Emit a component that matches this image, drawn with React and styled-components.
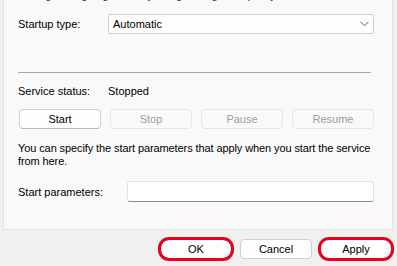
import React from 'react';
import styled, { createGlobalStyle, css } from 'styled-components';

const Global = createGlobalStyle`
  html, body { margin: 0; padding: 0; overflow: hidden; }
  body {
    background: #f0f0f0;
    font-family: "Liberation Sans", Arial, sans-serif;
    font-size: 11px;
    color: #000;
  }
`;

const Window = styled.div`
  width: 397px;
  height: 266px;
  background: #f0f0f0;
  overflow: hidden;
  display: flex;
  flex-direction: column;
`;

const Panel = styled.div`
  box-sizing: border-box;
  height: 230px;
  margin: 0 4px 0 3px;
  padding: 0 18px 0 14px;
  background: #f9f9f9;
  border: 1px solid #e3e3e3;
  border-top: none;
  display: flex;
  flex-direction: column;
`;

const ClippedLine = styled.div`
  margin-top: -12px;
  height: 14px;
  line-height: 14px;
  white-space: nowrap;
  color: #333;
`;

const FieldRow = styled.div`
  display: flex;
  align-items: center;
  margin-top: ${p => p.$top}px;
  height: ${p => p.$h || 14}px;
`;

const Label = styled.div`
  flex: 0 0 ${p => p.$w || 90}px;
`;

const Combo = styled.div`
  box-sizing: border-box;
  flex: 1;
  height: 20px;
  background: #fdfdfd;
  border: 1px solid #cfcfcf;
  border-radius: 2px;
  display: flex;
  align-items: center;
  justify-content: space-between;
  padding: 0 4px 0 4px;
`;

const Separator = styled.div`
  height: 1px;
  background: #a8a8a8;
  margin: 38px 3px 0 0;
`;

const ButtonRow = styled.div`
  display: grid;
  grid-template-columns: repeat(4, 1fr);
  gap: 9px;
  margin-top: 11px;
  padding-left: 1px;
`;

const ActionButton = styled.div`
  box-sizing: border-box;
  height: 20px;
  border-radius: 4px;
  display: flex;
  align-items: center;
  justify-content: center;
  ${p => p.$disabled
    ? css`
        background: #f9f9f9;
        border: 1px solid #e5e5e5;
        color: #9d9d9d;
      `
    : css`
        background: #fdfdfd;
        border: 1px solid #d2d2d2;
        border-bottom-color: #b8b8b8;
        color: #000;
      `}
`;

const Note = styled.div`
  margin-top: 13px;
  line-height: 13px;
  white-space: nowrap;
  letter-spacing: -0.1px;
`;

const TextInput = styled.div`
  box-sizing: border-box;
  flex: 1;
  height: 21px;
  background: #fff;
  border: 1px solid #e2e2e2;
  border-bottom: 1px solid #8c8c8c;
  border-radius: 3px;
`;

const Footer = styled.div`
  display: flex;
  justify-content: flex-end;
  gap: 8px;
  margin-top: 9px;
  padding-right: 5px;
`;

const DialogButton = styled.div`
  box-sizing: border-box;
  width: 72px;
  height: 20px;
  border-radius: 4px;
  background: #fdfdfd;
  border: 1px solid ${p => (p.$default ? '#3a3a3a' : '#d0d0d0')};
  display: flex;
  align-items: center;
  justify-content: center;
  ${p => p.$marked && css`
    outline: 3px solid #e8001d;
    outline-offset: -1px;
    border-radius: 9px;
  `}
`;

const Chevron = () => (
  <svg width="9" height="6" viewBox="0 0 9 6">
    <polyline points="0.5,0.8 4.5,4.8 8.5,0.8" fill="none" stroke="#5f5f5f" strokeWidth="1" />
  </svg>
);

export default function App() {
  return (
    <Window>
      <Global />
      <Panel>
        <ClippedLine>Manages outgoing traffic by using settings and policy</ClippedLine>
        <FieldRow $top={12} $h={20}>
          <Label>Startup type:</Label>
          <Combo>
            <span>Automatic</span>
            <Chevron />
          </Combo>
        </FieldRow>
        <Separator />
        <FieldRow $top={11}>
          <Label>Service status:</Label>
          <span>Stopped</span>
        </FieldRow>
        <ButtonRow>
          <ActionButton>Start</ActionButton>
          <ActionButton $disabled>Stop</ActionButton>
          <ActionButton $disabled>Pause</ActionButton>
          <ActionButton $disabled>Resume</ActionButton>
        </ButtonRow>
        <Note>
          You can specify the start parameters that apply when you start the service
          <br />
          from here.
        </Note>
        <FieldRow $top={13} $h={21}>
          <Label $w={109}>Start parameters:</Label>
          <TextInput />
        </FieldRow>
      </Panel>
      <Footer>
        <DialogButton $default $marked>OK</DialogButton>
        <DialogButton>Cancel</DialogButton>
        <DialogButton $marked>Apply</DialogButton>
      </Footer>
    </Window>
  );
}
